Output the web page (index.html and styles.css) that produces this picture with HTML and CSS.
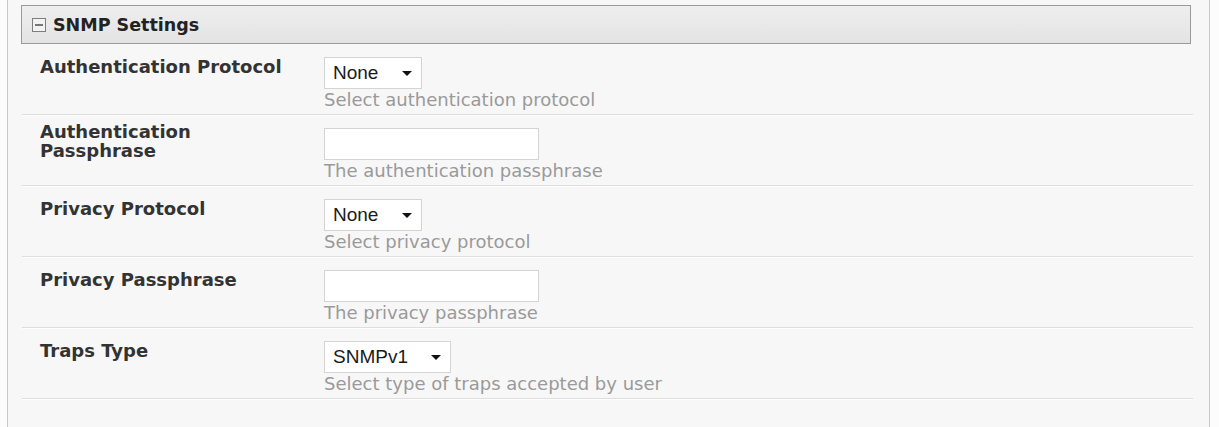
FILE: index.html
```html
<!DOCTYPE html>
<html lang="en">
<head>
    <meta charset="UTF-8">
    <title>SNMP Settings</title>
    <link rel="stylesheet" href="styles.css">
</head>
<body>
    <div class="panel">
        <div class="section-head">
            <span class="toggle"></span>
            <span class="section-title">SNMP Settings</span>
        </div>

        <div class="row">
            <div class="label">Authentication Protocol</div>
            <div class="field">
                <div class="select select-short">
                    <span>None</span>
                    <svg class="arrow" width="10" height="5" viewBox="0 0 10 5"><path d="M0 0H10L5 5Z" fill="#111"/></svg>
                </div>
                <div class="help">Select authentication protocol</div>
            </div>
        </div>

        <div class="row">
            <div class="label label-wrap">Authentication Passphrase</div>
            <div class="field">
                <input type="text" class="text-input">
                <div class="help">The authentication passphrase</div>
            </div>
        </div>

        <div class="row">
            <div class="label">Privacy Protocol</div>
            <div class="field">
                <div class="select select-short">
                    <span>None</span>
                    <svg class="arrow" width="10" height="5" viewBox="0 0 10 5"><path d="M0 0H10L5 5Z" fill="#111"/></svg>
                </div>
                <div class="help">Select privacy protocol</div>
            </div>
        </div>

        <div class="row">
            <div class="label">Privacy Passphrase</div>
            <div class="field">
                <input type="text" class="text-input">
                <div class="help">The privacy passphrase</div>
            </div>
        </div>

        <div class="row">
            <div class="label">Traps Type</div>
            <div class="field">
                <div class="select select-wide">
                    <span>SNMPv1</span>
                    <svg class="arrow" width="10" height="5" viewBox="0 0 10 5"><path d="M0 0H10L5 5Z" fill="#111"/></svg>
                </div>
                <div class="help">Select type of traps accepted by user</div>
            </div>
        </div>
    </div>
</body>
</html>
```

FILE: styles.css
```css
* {
    margin: 0;
    padding: 0;
    box-sizing: border-box;
}

body {
    font-family: "DejaVu Sans", Verdana, sans-serif;
    background: #fcfcfc;
    color: #333;
}

.panel {
    margin-left: 7px;
    width: 1203px;
    min-height: 440px;
    padding: 5px 18px 0 13px;
    background: #f7f7f7;
    border-left: 1px solid #c8c8c8;
    border-right: 1px solid #c8c8c8;
}

.section-head {
    display: flex;
    align-items: center;
    height: 39px;
    padding-left: 10px;
    border: 1px solid #9a9a9a;
    background: linear-gradient(#eeeeee, #e9e9e9 50%, #e3e3e3);
}

.toggle {
    position: relative;
    width: 14px;
    height: 14px;
    border: 1px solid #7e7e7e;
    background: #f2f2f2;
    margin-right: 7px;
}

.toggle::after {
    content: "";
    position: absolute;
    left: 2px;
    right: 2px;
    top: 5px;
    height: 2px;
    background: #777;
}

.section-title {
    font-size: 17.5px;
    font-weight: bold;
    color: #222;
}

.row {
    display: flex;
    margin: 0 -2px 0 1px;
    border-bottom: 1px solid #dedede;
    box-shadow: 0 1px 0 #fdfdfd;
}

.label {
    width: 291px;
    padding: 13px 22px 0 18px;
    font-size: 18px;
    line-height: 20px;
    font-weight: bold;
    color: #333;
}

.label-wrap {
    padding-top: 7px;
    line-height: 19px;
}

.field {
    flex: 1;
    padding: 13px 0 4px 11px;
}

.select {
    display: flex;
    align-items: center;
    justify-content: space-between;
    height: 32px;
    padding: 0 9px 0 8px;
    background: #fff;
    border: 1px solid #d4d4d4;
    font-family: "Liberation Sans", Arial, sans-serif;
    font-size: 19px;
    color: #1a1a1a;
}

.select-short {
    width: 98px;
}

.select-wide {
    width: 127px;
}

.text-input {
    display: block;
    width: 215px;
    height: 32px;
    background: #fff;
    border: 1px solid #d4d4d4;
}

.help {
    font-size: 18px;
    line-height: 21px;
    color: #9a9a9a;
}
```
